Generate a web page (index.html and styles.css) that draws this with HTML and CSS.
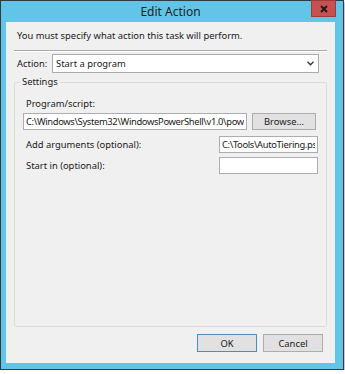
FILE: index.html
```html
<!DOCTYPE html>
<html lang="en">
<head>
  <meta charset="UTF-8">
  <meta name="viewport" content="width=device-width, initial-scale=1.0">
  <title>Edit Action</title>
  <link rel="stylesheet" href="styles.css">
</head>
<body>
  <div class="window">
    <div class="titlebar">
      <span class="title">Edit Action</span>
      <button class="close" aria-label="Close">
        <svg width="8" height="8" viewBox="0 0 8 8"><path d="M1 1 L7 7 M7 1 L1 7" stroke="#1c1c1c" stroke-width="2" fill="none"/></svg>
      </button>
    </div>
    <div class="content">
      <p class="intro">You must specify what action this task will perform.</p>
      <div class="sep"></div>
      <div class="action-row">
        <span class="action-label">Action:</span>
        <div class="select">
          <span>Start a program</span>
          <svg width="7" height="5" viewBox="0 0 7 5"><path d="M0.5 0.8 L3.5 3.8 L6.5 0.8" stroke="#333" stroke-width="1.3" fill="none"/></svg>
        </div>
      </div>
      <fieldset class="group">
        <legend>Settings</legend>
        <div class="field-label">Program/script:</div>
        <div class="program-row">
          <input class="textbox program" type="text" value="C:\Windows\System32\WindowsPowerShell\v1.0\powershell.exe" readonly>
          <button class="btn browse">Browse...</button>
        </div>
        <div class="arg-row">
          <span class="field-text">Add arguments (optional):</span>
          <input class="textbox small" type="text" value="C:\Tools\AutoTiering.ps1" readonly>
        </div>
        <div class="arg-row start">
          <span class="field-text">Start in (optional):</span>
          <input class="textbox small" type="text" value="" readonly>
        </div>
      </fieldset>
      <div class="buttons">
        <button class="btn default">OK</button>
        <button class="btn">Cancel</button>
      </div>
    </div>
  </div>
</body>
</html>
```

FILE: styles.css
```css
html, body {
  margin: 0;
  background: #ffffff;
}
body {
  font-family: "Noto Sans", "Liberation Sans", sans-serif;
  font-size: 9.4px;
  color: #1a1a1a;
}
.window {
  position: relative;
  width: 344px;
  height: 370px;
  box-sizing: border-box;
  border: 1px solid #2f3b40;
  background: #62c5e8;
  padding: 0 8px 5px 5px;
  box-shadow: 1px 2px 3px rgba(0, 0, 0, 0.35);
}
.titlebar {
  height: 21px;
  display: flex;
  justify-content: center;
  align-items: center;
}
.title {
  font-size: 12px;
  color: #1e1e1e;
}
.close {
  position: absolute;
  top: -1px;
  right: 7px;
  width: 25px;
  height: 17px;
  padding: 0;
  border: 1px solid #9e3c3c;
  background: #c75050;
  display: flex;
  justify-content: center;
  align-items: center;
}
.content {
  background: #f0f0f0;
  height: 341px;
  box-sizing: border-box;
  padding-top: 8px;
}
.intro {
  margin: 0;
  padding: 0 11px;
  line-height: 12px;
}
.sep {
  margin: 8px 8px 0;
  border-top: 1px solid #a9a9a9;
  border-bottom: 1px solid #ffffff;
}
.action-row {
  margin-top: 2px;
  padding-left: 11px;
  display: flex;
  align-items: center;
}
.action-label {
  width: 35px;
}
.select {
  width: 267px;
  height: 19px;
  box-sizing: border-box;
  border: 1px solid #acacac;
  background: #ffffff;
  display: flex;
  align-items: center;
  justify-content: space-between;
  padding: 0 4px 0 3px;
}
.group {
  margin: 3px 8px 0;
  padding: 0;
  height: 251px;
  box-sizing: border-box;
  border: 1px solid #dcdcdc;
  border-radius: 2px;
  min-inline-size: 0;
}
.group legend {
  margin-left: 5px;
  padding: 0 2px;
  line-height: 12px;
}
.field-label {
  margin-top: 10px;
  padding-left: 11px;
  line-height: 12px;
}
.textbox {
  height: 17px;
  box-sizing: border-box;
  border: 1px solid #abadb3;
  background: #ffffff;
  padding: 0 2px;
  margin: 0;
  font-family: inherit;
  font-size: 9.4px;
  letter-spacing: -0.35px;
  color: #1a1a1a;
  outline: none;
}
.program-row {
  margin: 3px 9px 0 8px;
  display: flex;
  align-items: center;
  gap: 5px;
}
.program {
  width: 224px;
}
.btn {
  height: 18px;
  width: 60px;
  box-sizing: border-box;
  border: 1px solid #adadad;
  background: #e1e1e1;
  font-family: inherit;
  font-size: 9.4px;
  color: #1a1a1a;
  padding: 0;
}
.browse {
  width: 64px;
  height: 17px;
}
.arg-row {
  margin: 6px 8px 0 11px;
  display: flex;
  justify-content: space-between;
  align-items: center;
}
.arg-row.start {
  margin-top: 4px;
}
.small {
  width: 99px;
}
.buttons {
  margin-top: 7px;
  padding-right: 12px;
  display: flex;
  justify-content: flex-end;
  gap: 6px;
}
.btn.default {
  border-color: #4c8dc6;
}
```
